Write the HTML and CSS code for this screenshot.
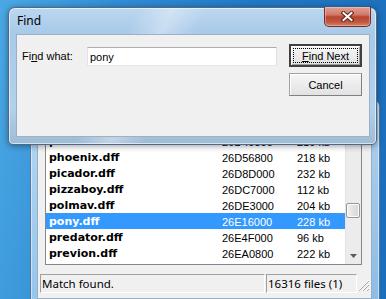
FILE: index.html
```html
<!DOCTYPE html>
<html lang="en">
<head>
    <meta charset="UTF-8">
    <meta name="viewport" content="width=device-width, initial-scale=1.0">
    <title>Find</title>
    <link rel="stylesheet" href="styles.css">
</head>
<body>
    <div class="desktop">
        <div class="main-window">
            <div class="client">
                <div class="list">
                    <div class="rows">
                        <div class="row"><span class="col-name">pcj600.dff</span><span class="col-offset">26D31000</span><span class="col-size">196 kb</span></div>
                        <div class="row"><span class="col-name">peren.dff</span><span class="col-offset">26D40800</span><span class="col-size">210 kb</span></div>
                        <div class="row"><span class="col-name">phoenix.dff</span><span class="col-offset">26D56800</span><span class="col-size">218 kb</span></div>
                        <div class="row"><span class="col-name">picador.dff</span><span class="col-offset">26D8D000</span><span class="col-size">232 kb</span></div>
                        <div class="row"><span class="col-name">pizzaboy.dff</span><span class="col-offset">26DC7000</span><span class="col-size">112 kb</span></div>
                        <div class="row"><span class="col-name">polmav.dff</span><span class="col-offset">26DE3000</span><span class="col-size">204 kb</span></div>
                        <div class="row selected"><span class="col-name">pony.dff</span><span class="col-offset">26E16000</span><span class="col-size">228 kb</span></div>
                        <div class="row"><span class="col-name">predator.dff</span><span class="col-offset">26E4F000</span><span class="col-size">96 kb</span></div>
                        <div class="row"><span class="col-name">previon.dff</span><span class="col-offset">26EA0800</span><span class="col-size">222 kb</span></div>
                        <div class="row"><span class="col-name">primo.dff</span><span class="col-offset">26EF2000</span><span class="col-size">240 kb</span></div>
                    </div>
                    <div class="scrollbar">
                        <div class="scroll-btn"></div>
                        <div class="scroll-thumb"></div>
                        <div class="scroll-btn scroll-down">
                            <svg width="7" height="4" viewBox="0 0 7 4"><polygon points="0,0 7,0 3.5,4" fill="#5a5a5a"/></svg>
                        </div>
                    </div>
                </div>
                <div class="statusbar">
                    <div class="panel panel-main">Match found.</div>
                    <div class="panel panel-count">16316 files (1)</div>
                    <div class="grip">
                        <svg width="12" height="12" viewBox="0 0 12 12">
                            <g stroke="#fff" stroke-width="1">
                                <line x1="12" y1="1" x2="1" y2="12"/>
                                <line x1="12" y1="5" x2="5" y2="12"/>
                                <line x1="12" y1="9" x2="9" y2="12"/>
                            </g>
                            <g stroke="#a6a6a6" stroke-width="1">
                                <line x1="12" y1="2" x2="2" y2="12"/>
                                <line x1="12" y1="6" x2="6" y2="12"/>
                                <line x1="12" y1="10" x2="10" y2="12"/>
                            </g>
                        </svg>
                    </div>
                </div>
            </div>
        </div>

        <div class="find-dialog">
            <div class="title">Find</div>
            <div class="close-btn">
                <svg width="13" height="11" viewBox="0 0 13 11">
                    <g stroke-linecap="square">
                        <path d="M2.5 2 L10.5 9 M10.5 2 L2.5 9" stroke="#5a2219" stroke-width="4"/>
                        <path d="M2.5 2 L10.5 9 M10.5 2 L2.5 9" stroke="#fff" stroke-width="2"/>
                    </g>
                </svg>
            </div>
            <div class="dialog-client">
                <div class="find-row">
                    <label class="find-label" for="find-what">Fi<u>n</u>d what:</label>
                    <input class="find-input" type="text" id="find-what" value="pony">
                    <div class="buttons">
                        <button class="btn btn-default"><span class="focus-ring"><u>F</u>ind Next</span></button>
                        <button class="btn">Cancel</button>
                    </div>
                </div>
            </div>
        </div>
    </div>
</body>
</html>
```

FILE: styles.css
```css
* {
    box-sizing: border-box;
    margin: 0;
    padding: 0;
}

body {
    width: 386px;
    height: 299px;
    overflow: hidden;
    font-family: 'Liberation Sans', Arial, sans-serif;
    font-size: 11px;
    color: #000;
}

.desktop {
    position: relative;
    width: 386px;
    height: 299px;
    overflow: hidden;
    background:
        radial-gradient(ellipse 60px 14px at 215px 302px, #f4e88a 0, rgba(244, 232, 138, 0) 100%),
        linear-gradient(100deg, #4ba8e4 0%, #318cd4 28%, #2178c4 60%, #1b6ebb 100%);
}

.main-window {
    position: absolute;
    left: 30px;
    top: 100px;
    width: 350px;
    height: 206px;
    padding: 7px 7px 6px 6px;
    border: 1px solid rgba(20, 50, 90, 0.55);
    border-radius: 6px;
    background: linear-gradient(to bottom, rgba(200, 226, 248, 0.85), rgba(180, 214, 242, 0.75));
    box-shadow: inset 0 0 0 1px rgba(255, 255, 255, 0.5);
}

.client {
    height: 100%;
    background-color: #f0f0f0;
    border: 1px solid #98aec4;
    padding: 7px 9px 0 7px;
}

.list {
    display: flex;
    height: 149px;
    border: 1px solid #828790;
    background-color: #fff;
}

.rows {
    width: 299px;
    overflow: hidden;
}

.row {
    display: flex;
    height: 16px;
    padding-top: 1px;
    line-height: 16px;
    white-space: nowrap;
}

.row.selected {
    background-color: #3399ff;
    color: #fff;
}

.col-name {
    width: 176px;
    padding-left: 3px;
    font-family: 'DejaVu Sans', Verdana, sans-serif;
    font-weight: bold;
    font-size: 11px;
}

.col-offset {
    width: 75px;
}

.col-size {
    flex: 1;
}

.scrollbar {
    width: 16px;
    display: flex;
    flex-direction: column;
    background-color: #ececec;
    border-left: 1px solid #e2e2e2;
}

.scroll-btn {
    height: 17px;
}

.scroll-thumb {
    height: 15px;
    margin: 69px 1px 0 0;
    border: 1px solid #979797;
    border-radius: 2px;
    background: linear-gradient(to right, #f3f3f3, #e2e2e2 50%, #d6d6d6);
    box-shadow: inset 0 0 0 1px #fbfbfb;
}

.scroll-down {
    margin-top: auto;
    display: flex;
    align-items: center;
    justify-content: center;
}

.statusbar {
    display: flex;
    margin-top: 9px;
    margin-left: -6px;
    margin-right: -9px;
    height: 19px;
    padding-left: 1px;
    font-family: 'Noto Sans', sans-serif;
    font-size: 11.5px;
    line-height: 17px;
}

.panel {
    border-top: 1px solid #a0a0a0;
    border-left: 1px solid #a0a0a0;
    border-bottom: 1px solid #fff;
    border-right: 1px solid #fff;
    padding-left: 1px;
    white-space: nowrap;
}

.panel-main {
    width: 225px;
    margin-right: 1px;
}

.panel-count {
    flex: 1;
}

.grip {
    width: 14px;
    display: flex;
    align-items: flex-end;
    justify-content: flex-end;
    padding: 0 2px 2px 0;
}

.find-dialog {
    position: absolute;
    left: 8px;
    top: 7px;
    width: 369px;
    height: 138px;
    display: flex;
    flex-direction: column;
    padding: 0 6px 7px 7px;
    border: 1px solid #4f6a88;
    border-radius: 7px 7px 5px 5px;
    background:
        linear-gradient(115deg, rgba(255, 255, 255, 0) 30%, rgba(255, 255, 255, 0.35) 38%, rgba(255, 255, 255, 0) 46%),
        linear-gradient(to bottom, #bcd7f0 0, #a8c9e8 26px, #b3d1ec 100px, #9fbbd6 100%);
    box-shadow: inset 0 0 0 1px rgba(255, 255, 255, 0.6), 0 1px 6px rgba(0, 0, 0, 0.4);
}

.title {
    height: 26px;
    line-height: 25px;
    padding-left: 1px;
    font-family: 'Noto Sans', sans-serif;
    font-size: 12px;
}

.close-btn {
    position: absolute;
    top: -1px;
    right: 5px;
    width: 47px;
    height: 20px;
    display: flex;
    align-items: center;
    justify-content: center;
    border: 1px solid #6b3128;
    border-top: none;
    border-radius: 0 0 5px 5px;
    background: linear-gradient(to bottom, #e2a093 0, #d27a6a 40%, #b8452f 52%, #c0563f 78%, #d88068 100%);
    box-shadow: inset 0 0 0 1px rgba(255, 210, 200, 0.45);
}

.dialog-client {
    flex: 1;
    background-color: #f0f0f0;
    border: 1px solid #9bb1c6;
    padding: 9px 0 0 5px;
}

.find-row {
    display: flex;
}

.find-label {
    width: 65px;
    margin-top: 3px;
    height: 19px;
    line-height: 19px;
}

.find-input {
    width: 190px;
    height: 19px;
    margin-top: 3px;
    margin-right: 12px;
    padding: 0 2px;
    border: 1px solid #abadb3;
    border-left-color: #e2e3ea;
    border-right-color: #dbdfe6;
    border-bottom-color: #e3e9ef;
    font-family: 'Liberation Sans', Arial, sans-serif;
    font-size: 11px;
    background-color: #fff;
    outline: none;
}

.buttons {
    display: flex;
    flex-direction: column;
    gap: 6px;
}

.btn {
    width: 73px;
    height: 23px;
    font-family: 'Liberation Sans', Arial, sans-serif;
    font-size: 11px;
    color: #000;
    background: linear-gradient(to bottom, #f6f6f6, #ececec 50%, #e2e2e2);
    border: 1px solid #a3a3a3;
    border-right-color: #808080;
    border-bottom-color: #808080;
    box-shadow: inset 1px 1px 0 #fff;
}

.btn-default {
    border: 2px solid #404040;
    padding: 2px;
    box-shadow: inset 1px 1px 0 #fff, inset -1px -1px 0 #a0a0a0;
}

.focus-ring {
    display: block;
    height: 100%;
    line-height: 15px;
    border: 1px dotted #000;
}
```
